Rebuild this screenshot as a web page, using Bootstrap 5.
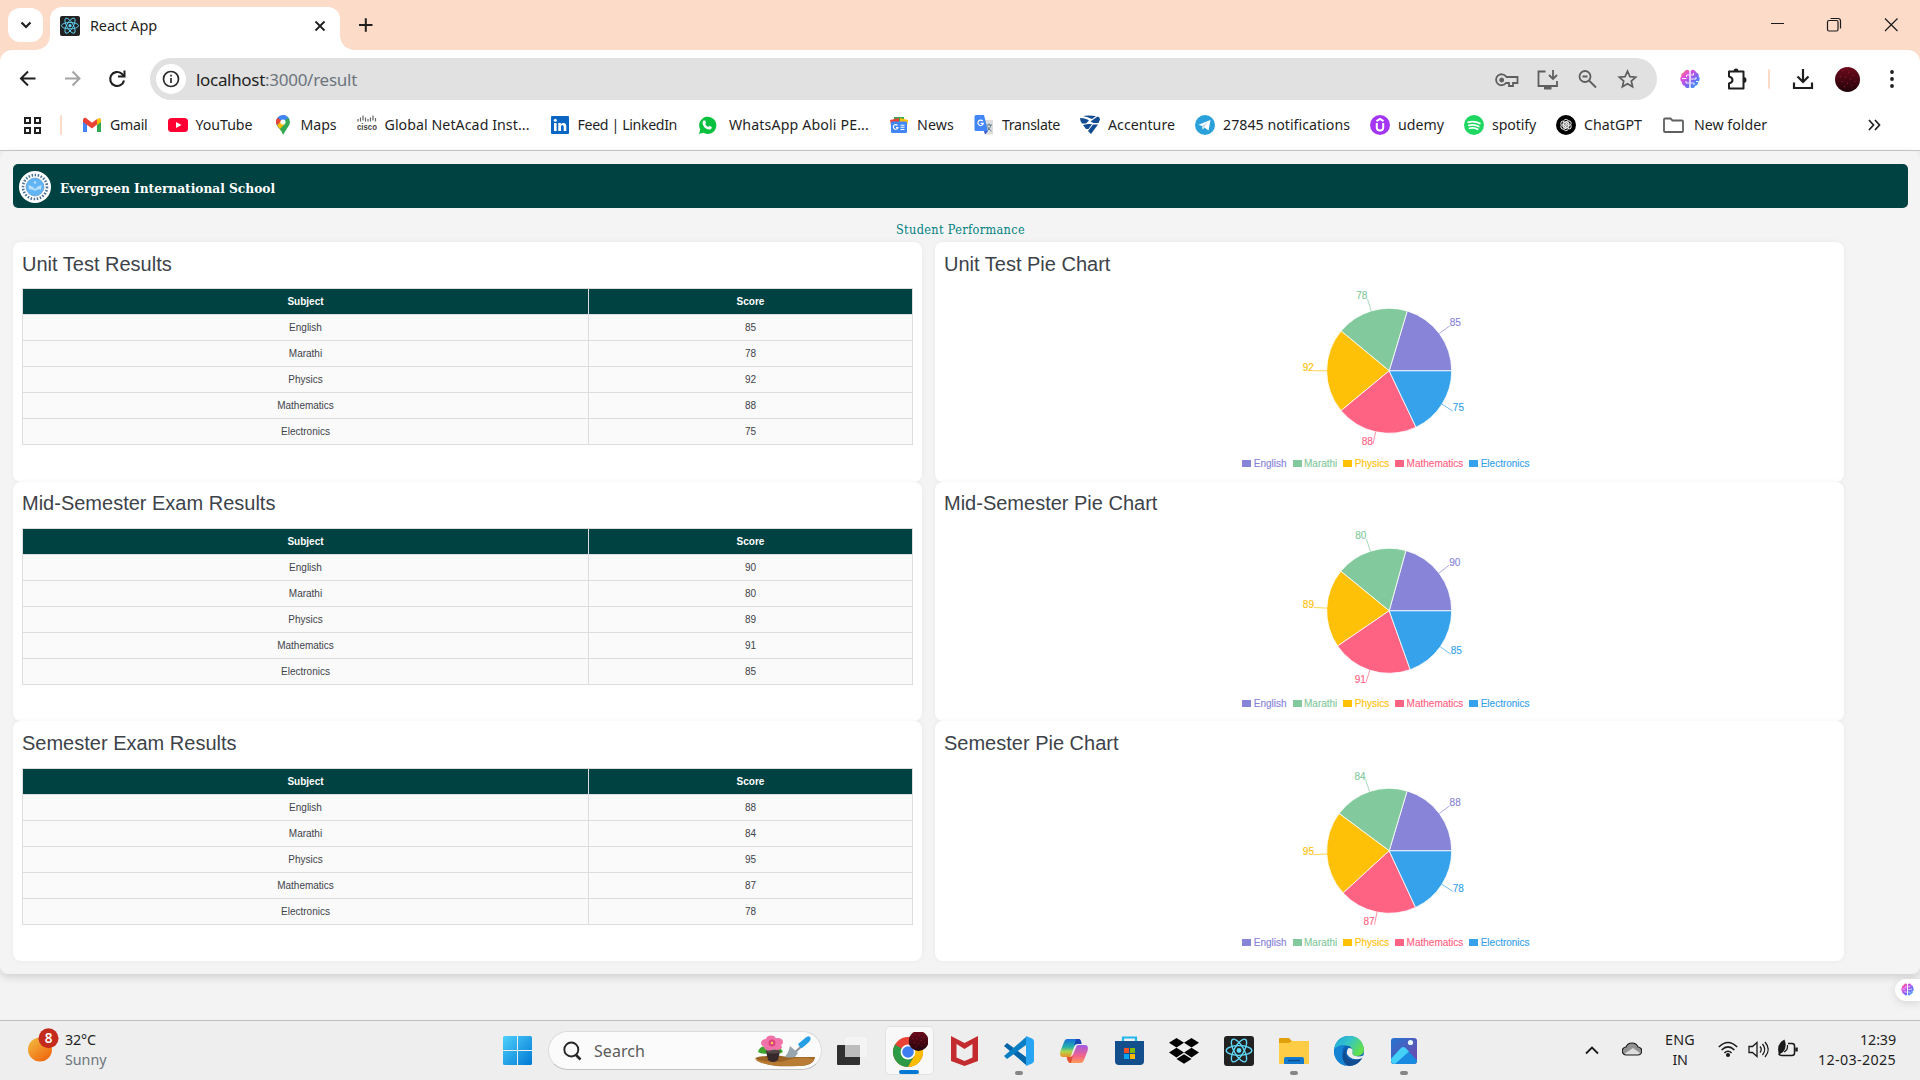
<!DOCTYPE html>
<html lang="en">
<head>
<meta charset="utf-8">
<title>React App</title>
<link href="https://cdn.jsdelivr.net/npm/bootstrap@5.3.0/dist/css/bootstrap.min.css" rel="stylesheet">
<style>
  body { width: 1920px; height: 1080px; overflow: hidden; background: #f3f3f3; font-family: "Noto Sans", "Open Sans", sans-serif; color: #1f1f1f; }
  svg { display: block; flex: none; }
  .fit { display: inline-block; white-space: nowrap; flex: none; }
  .strip { height: 50px; background: #fcdbc9; padding-left: 8px; }
  .tab-menu { width: 35px; height: 34px; border-radius: 12px; margin-top: 8px; position: relative; z-index: 1; }
  .app-tab { width: 290px; height: 43px; margin: 7px 0 0 7px; padding: 0 13px 2px 10px; border-radius: 12px 12px 0 0; position: relative; font-size: 14.5px; }
  .app-tab::before, .app-tab::after { content: ""; position: absolute; bottom: 0; width: 14px; height: 14px; }
  .app-tab::before { left: -14px; background: radial-gradient(circle at 0 0, #fcdbc9 13.5px, #fff 14px); }
  .app-tab::after { right: -14px; background: radial-gradient(circle at 100% 0, #fcdbc9 13.5px, #fff 14px); }
  .tab-title { margin-left: 10px; padding-bottom: 3px; }
  .chrome-shell { height: 101px; background: #fcdbc9; border-bottom: 1px solid #c8c8c8; }
  .chrome-body { border-radius: 12px 12px 0 0; height: 100px; }
  .toolbar { height: 58px; padding-left: 18px; }
  .omnibox { width: 1507px; height: 42px; border-radius: 21px; background: #e1e1e1; margin-left: 22px; padding: 0 16px 0 6px; font-size: 17px; }
  .omnibox .fit { padding-top: 1px; }
  .info-dot { width: 30px; height: 30px; margin-right: 10px; }
  .vline { width: 2px; height: 20px; background: #fcdbc9; border-radius: 1px; flex: none; }
  .ext-brain { margin-left: 23px; }
  .ext-puzzle { margin-left: 25px; }
  .ext-line { margin: 0 22px 0 19px; }
  .ext-user { margin-left: 21px; }
  .bookmarks { height: 34px; padding-left: 23px; font-size: 14.2px; }
  .bm-list { gap: 20px; margin-left: 19.5px; }
  .bm { gap: 8px; }
  .bm .wide { margin-left: 4px; }
  .bm .folder-name { margin-left: 2px; }
  .bm-more { margin-right: 39px; }
  .page { height: 823px; background: #f4f4f4; padding: 13px 12px 0 13px; border-radius: 8px; box-shadow: 0 3px 9px rgba(0,0,0,.15); font-family: "Liberation Sans", Arial, sans-serif; }
  .school { height: 44px; background: #004242; border-radius: 5px; padding: 2px 0 0 6px; gap: 9px; color: #fff; }
  .school-name { font: bold 13.6px "DejaVu Serif Condensed", "DejaVu Serif", serif; padding-top: 1px; }
  .perf { height: 34px; padding-top: 14px; color: #008080; font: 12.6px/16px "DejaVu Serif Condensed", "DejaVu Serif", serif; text-align: center; }
  .board { display: grid; grid-template-columns: 909px 909px; column-gap: 13px; grid-auto-rows: 239.67px; }
  .panel { background: #fff; border-radius: 8px; padding: 0 9px; box-shadow: 0 0 5px rgba(0,0,0,.05); color: #3d4349; }
  .panel h2 { font-size: 20px; line-height: 24px; padding: 9.7px 0; height: 46.4px; margin: 0; font-weight: 400; }
  .scores { width: 891px; border-collapse: collapse; table-layout: fixed; font-size: 10px; line-height: 15px; text-align: center; }
  .scores th, .scores td { height: 26px; padding: 0; border: 1px solid #ddd; vertical-align: middle; }
  .scores th { background: #004242; color: #fff; }
  .scores th:first-child { width: 566px; }
  .scores td { background: #fafafa; }
  .pie-key { height: 18px; gap: 6px; padding-right: 7px; font-size: 10px; -webkit-text-stroke: .15px currentColor; }
  .pie-key i { display: inline-block; width: 9px; height: 7px; margin-right: 2.4px; background: currentColor; }
  .below { height: 46px; }
  .side-pill { position: absolute; right: 0; top: 979px; width: 25px; height: 22px; border-radius: 11px 0 0 11px; box-shadow: 0 2px 10px rgba(0,0,0,.12); padding: 4px 0 0 6px; }
  .taskbar { height: 60px; background: #eee; border-top: 1px solid #bdbdbd; }
  .weather { width: 503px; flex: none; padding-left: 28px; font-size: 14.3px; line-height: 20px; gap: 9px; }
  .two-line { padding-bottom: 2px; }
  .search-pill { width: 274px; height: 39px; border-radius: 20px; background: #fbfbfb; border: 1px solid #dcdcdc; border-bottom-color: #c2c2c2; margin-left: 16px; padding: 0 5px 0 14px; font-size: 16px; color: #5c5c5c; gap: 12px; }
  .apps { margin-left: 6.5px; }
  .task { width: 55px; height: 59px; position: relative; }
  .task.live { width: 49px; height: 49px; margin: 0 3px 0 -3px; background: #f8f8f8; border-radius: 5px; border: 1px solid #e2e2e2; }
  .task.open::after { content: ""; position: absolute; bottom: 5px; left: 23px; width: 8px; height: 4px; border-radius: 2px; background: #868686; }
  .task.live::after { content: ""; position: absolute; bottom: 0; left: 13px; width: 20px; height: 4px; border-radius: 2px; background: #0078d4; }
  .tray { font-size: 14.3px; line-height: 20px; padding-right: 24px; gap: 23px; }
  .clock { margin-left: -3px; }
</style>
<script src="https://cdn.jsdelivr.net/npm/bootstrap@5.3.0/dist/js/bootstrap.bundle.min.js"></script>
</head>
<body>
<svg width="0" height="0" class="position-absolute">
  <defs>
    <linearGradient id="gBrain" x1="0" y1="0" x2="1" y2="1"><stop offset="0" stop-color="#ff8a4c"/><stop offset=".3" stop-color="#e04be0"/><stop offset=".65" stop-color="#6d6cf5"/><stop offset="1" stop-color="#20b8ff"/></linearGradient>
    <linearGradient id="gWin" x1="0" y1="0" x2="1" y2="1"><stop offset="0" stop-color="#4fd0fb"/><stop offset="1" stop-color="#0078d4"/></linearGradient>
    <linearGradient id="gSun" x1="0" y1="0" x2=".8" y2="1"><stop offset="0" stop-color="#f2c043"/><stop offset="1" stop-color="#f0640c"/></linearGradient>
    <linearGradient id="gAva" x1="0" y1="0" x2="0" y2="1"><stop offset="0" stop-color="#6e0a1c"/><stop offset="1" stop-color="#22040a"/></linearGradient>
    <symbol id="react" viewBox="0 0 30 30"><rect width="30" height="30" rx="3" fill="#222"/><g fill="none" stroke="#61dafb" stroke-width="1.3"><ellipse cx="15" cy="14.5" rx="12.8" ry="4.8"/><ellipse cx="15" cy="14.5" rx="12.8" ry="4.8" transform="rotate(60 15 14.5)"/><ellipse cx="15" cy="14.5" rx="12.8" ry="4.8" transform="rotate(120 15 14.5)"/></g><circle cx="15" cy="14.5" r="2.4" fill="#61dafb"/></symbol>
    <symbol id="brain" viewBox="0 0 20 20"><path fill="url(#gBrain)" d="M9.3 2v16.500c-1.600 1.200-4 .5-4.400-1.500C2.700 16.700 1.500 14.800 2 13 0 11.800-.2 9 1.300 7.600.9 5.300 2.200 3.700 4 3.300 4.700.8 8 0 9.300 2zM10.700 2v16.500c1.600 1.200 4 .5 4.400-1.500 2.200-.3 3.400-2.200 2.900-4 2-1.200 2.200-4 .7-5.400.4-2.300-.9-3.900-2.700-4.300C15.300.8 12 0 10.700 2z"/><path d="M9 6H6.500v2M2 9.500h4.500M9 14H6v-2M11 6h2.500V4M11 10h5V8M11 14h3v2M16 12.500h2" fill="none" stroke="#fff" stroke-width=".9"/></symbol>
    <symbol id="ava" viewBox="0 0 24 24"><circle cx="12" cy="12" r="12" fill="url(#gAva)"/><path d="M7 3.500h.1M13 5h.1M18 8h.1M5 9h.1M10 9.500h.1M15 11.500h.1M19 14h.1M7 14h.1M12 15.500h.1M16 18h.1M9 19h.1" stroke="#a8203a" stroke-width="1" stroke-linecap="round"/></symbol>
  </defs>
</svg>

<!-- Tab strip -->
<div class="strip d-flex">
  <div class="tab-menu bg-white d-flex align-items-center justify-content-center"><svg width="12" height="8" viewBox="0 0 12 8"><path d="M1.500 1.500 6 6l4.500-4.500" fill="none" stroke="#1f1f1f" stroke-width="2.200"/></svg></div>
  <div class="app-tab bg-white d-flex align-items-center">
    <svg width="20" height="20" class="mb-1"><use href="#react"/></svg>
    <span class="fit tab-title" data-w="67">React App</span>
    <svg class="ms-auto mb-1" width="14" height="14" viewBox="0 0 14 14"><path d="m2.500 2.500 9 9m0-9-9 9" stroke="#1f1f1f" stroke-width="1.800"/></svg>
  </div>
  <svg class="ms-3" width="20" height="50" viewBox="0 0 20 50"><path d="M3 25h13.500M9.800 18.300v13.500" stroke="#1f1f1f" stroke-width="2"/></svg>
  <svg class="ms-auto" width="152" height="50" viewBox="0 0 152 50" fill="none" stroke="#1b1b1b" stroke-width="1.200"><path d="M3 23.500h13M117 18.500l12.500 12.500m0-12.500-12.500 12.500"/><rect x="59.500" y="20.500" width="10.500" height="10.500" rx="1.500"/><path d="M62.500 18.500h7.500q2.500 0 2.500 2.500v7.500"/></svg>
</div>

<!-- Toolbar and bookmarks -->
<div class="chrome-shell">
<div class="chrome-body bg-white">
  <div class="toolbar d-flex align-items-center">
    <svg width="110" height="20" viewBox="0 0 110 20" fill="none" stroke-width="2"><path d="M17.500 9.500H3.500M10 2.500l-7 7 7 7" stroke="#1f1f1f"/><path d="M47 9.500h14M54.500 2.500l7 7-7 7" stroke="#a3a3a3"/><path d="M106 11.500A7 7 0 1 1 103.500 4.500l2.500 2.500" stroke="#1f1f1f" stroke-width="2.100"/><path d="M106.500 1.500v6H100" stroke="#1f1f1f"/></svg>
    <div class="omnibox d-flex align-items-center">
      <div class="info-dot bg-white rounded-circle d-flex align-items-center justify-content-center"><svg width="18" height="18" viewBox="0 0 18 18"><circle cx="9" cy="9" r="7.500" fill="none" stroke="#2b2b2b" stroke-width="1.700"/><path d="M9 8v5M9 4.800v1.700" stroke="#2b2b2b" stroke-width="1.700"/></svg></div>
      <span class="fit" data-w="69">localhost</span><span class="fit text-secondary" data-w="92">:3000/result</span>
      <svg class="ms-auto" width="146" height="22" viewBox="0 0 146 22" fill="none" stroke="#5e5e5e" stroke-width="1.800">
        <path d="M11 8.500A5.500 5.500 0 1 0 11 15h3v3h4v-3h4.500V9H11.500z"/><circle cx="6.700" cy="12" r="2" fill="#5e5e5e" stroke-width="1"/>
        <path d="M50.500 3.500h-7v14.500h18.500v-5M58 2v8.500M54 7l4 4 4-4"/><path d="M49 20h7.500" stroke-width="3"/>
        <g transform="translate(.5)"><circle cx="89.500" cy="8.500" r="5.500"/><path d="m93.500 12.500 7 7M87 8.500h5"/></g>
        <path d="m132.500 3.200 2.400 5.400 5.800.5-4.400 3.900 1.300 5.700-5.100-3-5.100 3 1.300-5.700-4.400-3.900 5.800-.5z" stroke-width="1.700"/>
      </svg>
    </div>
    <svg class="ext-brain" width="20" height="24" viewBox="0 0 20 20"><use href="#brain" width="20" height="20"/></svg>
    <svg class="ext-puzzle" width="24" height="26" viewBox="0 0 24 26"><path d="M4 5.500h14.500v17H4v-5q3.500-1 3.500-3.500T4 10.500z" fill="none" stroke="#1f1f1f" stroke-width="2" stroke-linejoin="round"/><path d="M8.500 5.500a2.500 3 0 0 1 5 0zM18.500 11a3 3 0 0 1 0 6z" fill="#1f1f1f"/></svg>
    <span class="vline ext-line"></span>
    <svg width="22" height="22" viewBox="0 0 22 22" fill="none" stroke="#1f1f1f" stroke-width="2.200"><path d="M11 1v13M5.500 8.500l5.500 5.500 5.500-5.500M2 14.500v5.500h18v-5.500"/></svg>
    <svg class="ext-user" width="25" height="25"><use href="#ava"/></svg>
    <svg class="ms-auto me-4" width="8" height="20" viewBox="0 0 8 20" fill="#1f1f1f"><circle cx="4" cy="3" r="1.900"/><circle cx="4" cy="10" r="1.900"/><circle cx="4" cy="17" r="1.900"/></svg>
  </div>

  <div class="bookmarks d-flex align-items-center">
    <svg width="19" height="19" viewBox="0 0 19 19" fill="none" stroke="#1f1f1f" stroke-width="2"><path d="M2 2h5v5H2zM12 2h5v5h-5zM2 12h5v5H2zM12 12h5v5h-5z"/></svg>
    <span class="vline" style="margin-left:18px"></span>
    <div class="bm-list d-flex align-items-center ms-3 ps-1">
      <div class="bm d-flex align-items-center"><svg width="20" height="20" viewBox="0 0 20 20"><path d="M1 4v13h4V8.500z" fill="#4285f4"/><path d="M19 4v13h-4V8.500z" fill="#34a853"/><path d="M15 4.500 17 3q2 0 2 2v2l-4 3z" fill="#fbbc04"/><path d="M1 7V5q.5-3 3-2l6 4.800L15 4v5.500l-5 4-9-6.500z" fill="#ea4335"/></svg><span class="fit" data-w="37.500">Gmail</span></div>
      <div class="bm d-flex align-items-center"><svg width="20" height="20" viewBox="0 0 20 20"><rect y="3" width="20" height="14" rx="3.500" fill="#ff0033"/><path d="m8 7 5.500 3L8 13z" fill="#fff"/></svg><span class="fit" data-w="57">YouTube</span></div>
      <div class="bm d-flex align-items-center"><svg width="20" height="20" viewBox="0 0 20 20"><path d="M10 0a7 7 0 0 0-7 7c0 3 1.500 4.500 3.500 7L16.500 4.500Q14.500 0 10 0z" fill="#4285f4"/><path d="M4.500 2.800 10 7 3.600 9.700Q2 6 4.500 2.800z" fill="#ea4335"/><path d="m4 10.500 10-9q6 5 0 12l-4 6.500-1.200-3z" fill="#34a853"/><path d="m4 10.500 3.500-4 4.500 2.300L7 14z" fill="#fbbc04"/><path d="M10 0q3 0 5 2.500l-4 4.500-4-3z" fill="#4285f4"/><circle cx="10" cy="7" r="2.600" fill="#fff"/></svg><span class="fit" data-w="36">Maps</span></div>
      <div class="bm d-flex align-items-center"><svg width="20" height="20" viewBox="0 0 20 20"><path d="M1 4v2.500M3.500 2.500v4M6 .5v5M8.500 2.500v4M11 4v2.500M13.500 2.500v4M16 .5v5M18.500 3v3.500" stroke="#666" stroke-width="1.200"/><text x="0" y="14.500" font-family="Liberation Sans" font-weight="bold" font-size="8.500" fill="#444" textLength="20" lengthAdjust="spacingAndGlyphs">cisco</text></svg><span class="fit" data-w="145">Global NetAcad Inst...</span></div>
      <div class="bm d-flex align-items-center"><svg width="20" height="20" viewBox="0 0 20 20"><rect x="1" y="1" width="18" height="18" rx="1" fill="#0a66c2"/><path d="M4 8h2.600v8H4zM8.300 8h2.500v1.200Q12 7.700 13.600 7.900 16.400 8.100 16.300 11.500V16h-2.600v-4.200q0-1.700-1.300-1.700T11 12v4H8.300z" fill="#fff"/><circle cx="5.300" cy="5.200" r="1.500" fill="#fff"/></svg><span class="fit" data-w="99.500">Feed | LinkedIn</span></div>
      <div class="bm d-flex align-items-center"><svg width="20" height="20" viewBox="0 0 20 20"><path d="M2 19 3.200 14.500A8.600 8.600 0 1 1 6.300 17.700z" fill="#0ac13f"/><path d="M6.500 5.500h1.700l.9 2.300-.9 1.200q1 2 3 2.900l1.200-1.200 2.300 1.200q0 2.600-2.800 2.600Q6.300 13.500 5.500 8q0-1.800 1-2.500z" fill="#fff"/></svg><span class="fit wide" data-w="140">WhatsApp Aboli PE...</span></div>
      <div class="bm d-flex align-items-center"><svg width="20" height="20" viewBox="0 0 20 20"><path d="M5 2h10v8H5z" fill="#34a853"/><path d="m1 5 9-2v8H2z" fill="#ea4335"/><path d="m19 5-8-2v8h7z" fill="#fbbc04"/><rect x="2" y="6.500" width="16" height="11.500" rx="1.200" fill="#4285f4"/><path d="M8.500 10.500a2.300 2.300 0 1 0 .4 2H7M11.500 10.200h4M11.500 12.300h4M11.500 14.500h4" fill="none" stroke="#fff" stroke-width="1.100"/></svg><span class="fit" data-w="37">News</span></div>
      <div class="bm d-flex align-items-center"><svg width="20" height="20" viewBox="0 0 20 20"><path d="M8 5h11v14.500h-8z" fill="#ddd"/><path d="M12.500 10H18M15 8.500V10M17 10q-1 4-4 6M13.500 11.500q1 3 4 4.500" fill="none" stroke="#607d8b"/><path d="m10 16 4 0-3 3.500z" fill="#3555c8"/><path d="M2 0h8l4 16H2q-1.500 0-1.500-1.500v-13Q.5 0 2 0z" fill="#4285f4"/><path d="M8.800 6.200a2.700 2.700 0 1 0 .5 2.200H6.700" fill="none" stroke="#fff" stroke-width="1.200"/></svg><span class="fit" data-w="58">Translate</span></div>
      <div class="bm d-flex align-items-center"><svg width="20" height="20" viewBox="0 0 20 20" fill="#124b91"><path d="M3 1q5-1 13 0l-4 3Q8 2 3 1zM0 3q6 0 9 2.500L6 8.500H2Q0 6 0 3zM17.500 1.500Q20 2 20 4.500l-1.500 3.500-5 0-3-1.500zM3 10l5-1 4 0-3.500 5H6zM13 9.500h5L11 19 8 16z"/></svg><span class="fit" data-w="67">Accenture</span></div>
      <div class="bm d-flex align-items-center"><svg width="20" height="20" viewBox="0 0 20 20"><circle cx="10" cy="10" r="10" fill="#2aa1da"/><path d="M3.500 9.700 15.500 5l-2 10.500-4-3-1.800 2-.7-3.500z" fill="#fff"/><path d="m7 11 6-4-4.200 5-1 2.300z" fill="#b8dcef"/></svg><span class="fit" data-w="127">27845 notifications</span></div>
      <div class="bm d-flex align-items-center"><svg width="20" height="20" viewBox="0 0 20 20"><circle cx="10" cy="10" r="10" fill="#a435f0"/><path d="M6.800 8v4.500q0 3 3.200 3t3.200-3V8M6.500 6.200 10 4l3.500 2.200" fill="none" stroke="#fff" stroke-width="2"/></svg><span class="fit" data-w="46">udemy</span></div>
      <div class="bm d-flex align-items-center"><svg width="20" height="20" viewBox="0 0 20 20"><circle cx="10" cy="10" r="10" fill="#1ed760"/><path d="M4 7.200q6.500-1.800 12 1.200M4.800 10.400q5.500-1.500 10 1.100M5.500 13.300q4.500-1.200 8.200 1" fill="none" stroke="#fff" stroke-width="1.700" stroke-linecap="round"/></svg><span class="fit" data-w="44">spotify</span></div>
      <div class="bm d-flex align-items-center"><svg width="20" height="20" viewBox="0 0 20 20"><circle cx="10" cy="10" r="10" fill="#000"/><g fill="none" stroke="#fff" stroke-width=".9"><g id="knot"><path d="M7.300 11.500V7.200A2.700 2.700 0 0 1 12 5.300M9 9.400l4-2.300"/></g><use href="#knot" transform="rotate(60 10 10)"/><use href="#knot" transform="rotate(120 10 10)"/><use href="#knot" transform="rotate(180 10 10)"/><use href="#knot" transform="rotate(240 10 10)"/><use href="#knot" transform="rotate(300 10 10)"/></g></svg><span class="fit" data-w="58">ChatGPT</span></div>
      <div class="bm d-flex align-items-center"><svg width="22" height="20" viewBox="0 0 22 20"><path d="M2 4.500Q2 3.500 3 3.500h5.500l2 2H20q1 0 1 1v9.500q0 1-1 1H3q-1 0-1-1z" fill="none" stroke="#5f5f5f" stroke-width="1.800"/></svg><span class="fit folder-name" data-w="73">New folder</span></div>
    </div>
    <svg class="ms-auto bm-more" width="14" height="12" viewBox="0 0 14 12"><path d="m2 1 4.500 5L2 11M8 1l4.500 5L8 11" fill="none" stroke="#1f1f1f" stroke-width="1.700"/></svg>
  </div>
</div>
</div>

<!-- Web page -->
<main class="page">
  <header class="school d-flex align-items-center">
    <svg width="32" height="32" viewBox="0 0 32 32"><circle cx="16" cy="16" r="16" fill="#fff"/><circle cx="16" cy="16" r="12" fill="none" stroke="#4a6f95" stroke-width="2.600" stroke-dasharray="1.500 1.600"/><circle cx="16" cy="16" r="9" fill="#62b5f5" stroke="#5b8fc4" stroke-width=".6"/><path d="M16 20q-3-2.500-6-1.500 0-2.500-1-4 5 0 7 4 2-4 7-4-1 1.500-1 4-3-1-6 1.500z" fill="#b5dffd"/><circle cx="16" cy="11.500" r="1.300" fill="#b5dffd"/></svg>
    <span class="school-name fit" data-w="215">Evergreen International School</span>
  </header>
  <div class="perf"><span class="fit" data-w="129">Student Performance</span></div>
  <div class="board" id="board"></div>
</main>
<div class="below"></div>
<div class="side-pill bg-white"><svg width="13" height="13"><use href="#brain"/></svg></div>

<!-- Taskbar -->
<footer class="taskbar d-flex align-items-center">
  <div class="weather d-flex align-items-center">
    <svg width="28" height="50" viewBox="0 0 28 50" class="overflow-visible"><circle cx="12" cy="23.500" r="12" fill="url(#gSun)"/><circle cx="20.500" cy="12.200" r="10" fill="#c42b1c"/><text x="20.500" y="17.100" text-anchor="middle" font-size="13.500" font-weight="600" fill="#fff">8</text></svg>
    <div class="two-line"><div><span class="fit" data-w="31">32°C</span></div><div class="text-secondary"><span class="fit" data-w="41.500">Sunny</span></div></div>
  </div>
  <svg width="29" height="29" viewBox="0 0 29 29" fill="url(#gWin)"><path d="M1.500 0H14v14H0V1.500Q0 0 1.500 0zM15 0h12.500Q29 0 29 1.500V14H15zM0 15h14v14H1.500Q0 29 0 27.500zM15 15h14v12.500q0 1.500-1.500 1.500H15z"/></svg>
  <div class="search-pill d-flex align-items-center">
    <svg width="19" height="20" viewBox="0 0 19 20" fill="none" stroke="#262626"><circle cx="8.300" cy="8.500" r="7" stroke-width="1.900"/><path d="m13 14 4.500 4.500" stroke-width="2.600"/></svg>
    <span class="fit" data-w="51">Search</span>
    <svg class="ms-auto" width="62" height="32" viewBox="0 0 62 32"><path d="M1 23q6-2 20-3l13 2 27 0q-1 9-17 9-34 2-43-8z" fill="#9c6426"/><path d="M1 24q20 6 32 1 12-4 27-1-2 7-17 7Q8 32 1 24z" fill="#b97c34"/><path d="M4 17q2-7 9-5l4 6q-8 2-13-1zM29 17q-3-6-8-5l-3 6q7 2 11-1z" fill="#3fa52c"/><path d="M12 16h14l-2 9q-5 4-10 0z" fill="#35292b"/><ellipse cx="19" cy="16.500" rx="7.500" ry="2" fill="#574648"/><g fill="#f172a9"><ellipse cx="12" cy="8" rx="5" ry="4"/><ellipse cx="24" cy="7" rx="5" ry="4"/><ellipse cx="17" cy="4" rx="5" ry="3.500"/><ellipse cx="15" cy="12" rx="5" ry="3.500"/><ellipse cx="23" cy="12" rx="5" ry="3"/></g><circle cx="18" cy="8" r="3.500" fill="#dc477f"/><circle cx="18" cy="8" r="1.200" fill="#ffd24d"/><path d="m40 18 9-8" stroke="#8b939a" stroke-width="2"/><path d="m44 9 6-5q4-4 6-2t-2 6l-6 5q-2 0-4-4z" fill="#249fe6"/><path d="m36 11 8 7-3 4q-4 1-10 0 4-5 5-11z" fill="#98a6b0"/></svg>
  </div>
  <div class="apps d-flex align-items-center ps-1">
    <div class="task d-flex align-items-center justify-content-center"><svg class="me-3" width="30" height="28" viewBox="0 0 30 28"><rect y="8" width="23" height="20" rx="1" fill="#303030"/><rect x="8" width="22" height="20" rx="1" fill="#f4f4f4" opacity=".93"/><path d="M8 8h15v12H8z" fill="#bdbdbd"/></svg></div>
    <div class="task live d-flex align-items-center justify-content-center"><svg width="38" height="38" viewBox="0 0 38 38"><circle cx="18" cy="20" r="15" fill="#ea4335"/><path d="M18 20 5 12.500A15 15 0 0 0 18 35l6.500-11.200z" fill="#2d9a46"/><path d="M18 20h0l13-7.500A15 15 0 0 1 18 35l6.500-11.200z" fill="#fbbc04"/><circle cx="18" cy="20" r="7.400" fill="#fff"/><circle cx="18" cy="20" r="5.800" fill="#3e7cf1"/><svg x="18.500" y="-1" width="20" height="20"><use href="#ava"/></svg></svg></div>
    <div class="task d-flex align-items-center justify-content-center"><svg width="27" height="30" viewBox="0 0 27 30"><path d="m0 0 13.500 7L27 0v25l-13.500 5L0 25z" fill="#c42b2f"/><path d="m5.500 8 8 5 8-5v13.500l-8 3.500-8-3.500z" fill="#eee"/></svg></div>
    <div class="task open d-flex align-items-center justify-content-center"><svg width="30" height="30" viewBox="0 0 30 30"><path d="m0 10 3-3 19 14v8z" fill="#0065a9"/><path d="m0 20 3 3L22 9V1z" fill="#087fc5"/><path d="m22 0 6 2.500q2 1 2 3v19q0 2-2 3L22 30z" fill="#27a5f2"/></svg></div>
    <div class="task d-flex align-items-center justify-content-center"><svg width="28" height="26" viewBox="0 0 28 26"><defs><linearGradient id="gC1" x1="0" y1="0" x2="0" y2="1"><stop stop-color="#176fdb"/><stop offset=".45" stop-color="#25b1a8"/><stop offset=".7" stop-color="#b1d64a"/><stop offset="1" stop-color="#f18b2c"/></linearGradient><linearGradient id="gC2" x1="0" y1="0" x2="0" y2="1"><stop stop-color="#a25be4"/><stop offset=".6" stop-color="#f0628c"/><stop offset="1" stop-color="#ff9b57"/></linearGradient></defs><path d="M7 1h11q2.500 0 3.500 5H17q-2 0-3 3l-3 9q-.5 1-2 1H3q-4 0-2.500-6L4 4q1-3 3-3z" fill="url(#gC1)"/><path d="M16 1h3q2 0 2.500 5H17q-2 0-3 2z" fill="#1a45b5"/><path d="M21 25H10q-2.500 0-3.500-6H10q2 0 3-2.500L16.500 8q.5-1 2-1H25q4 0 2.500 6L24 22q-1 3-3 3z" fill="url(#gC2)"/><path d="M7 19h3q2 0 3-2l-2 8q-3 0-4-6z" fill="#df5034"/></svg></div>
    <div class="task d-flex align-items-center justify-content-center"><svg width="29" height="30" viewBox="0 0 29 30"><path d="M8 6V1.500h13V6" fill="none" stroke="#22b5ee" stroke-width="2.200"/><path d="M0 5h29v20q0 4-4 4H4q-4 0-4-4z" fill="#124f8c"/><path d="M9 12h5v5H9z" fill="#f25022"/><path d="M15 12h5v5h-5z" fill="#7fba00"/><path d="M9 18h5v5H9z" fill="#00a4ef"/><path d="M15 18h5v5h-5z" fill="#ffb900"/></svg></div>
    <div class="task d-flex align-items-center justify-content-center"><svg width="30" height="26" viewBox="0 0 30 26"><path d="m7.500 0 7.500 4.800-7.500 4.800L0 4.800zM22.500 0 30 4.800l-7.500 4.800L15 4.800zM7.500 9.800l7.500 4.800-7.500 4.800L0 14.600zM22.500 9.800l7.500 4.800-7.500 4.800-7.500-4.800zM15 16.200l7.500 4.800L15 25.800 7.500 21z"/></svg></div>
    <div class="task d-flex align-items-center justify-content-center"><svg width="30" height="30"><use href="#react"/></svg></div>
    <div class="task open d-flex align-items-center justify-content-center"><svg width="30" height="28" viewBox="0 0 30 28"><path d="M0 2Q0 1 1 1h9l3 3h16q1 0 1 1v4H0z" fill="#dfa00b"/><path d="M0 6h10l3-2h16q1 0 1 1v22H1q-1 0-1-1z" fill="#ffcd45"/><path d="M5 27v-5q0-2 2-2h16q2 0 2 2v5z" fill="#1279cd"/><path d="M9 23.500h12" stroke="#0a4c93" stroke-width="1.500"/></svg></div>
    <div class="task d-flex align-items-center justify-content-center"><svg width="30" height="30" viewBox="0 0 30 30"><defs><linearGradient id="gE" x1="0" y1="0" x2="1" y2=".5"><stop stop-color="#1da5dd"/><stop offset=".5" stop-color="#34c3c9"/><stop offset="1" stop-color="#63e04c"/></linearGradient></defs><circle cx="15" cy="15" r="15" fill="#0d63b8"/><path d="M0 14Q2 0 15 0t15 13q0 7-7 7-6 0-4.500-4Q19 10 12 9.500 4 9 0 14z" fill="url(#gE)"/><path d="M0 14q4-6 11-4.500Q5 16 12 30 0 27 0 14z" fill="#1583d4"/><path d="M12 12q-2 12 8 12 4 0 8-2-5 8-13 8Q4 24 12 12z" fill="#124c91"/><path d="M14.500 12q5 0 4 4-1 3 3 4 4 1 8-.5L28.500 22q-8 3-13-1-5-4-1-9z" fill="#eee"/></svg></div>
    <div class="task open d-flex align-items-center justify-content-center"><svg width="26" height="26" viewBox="0 0 26 26"><defs><linearGradient id="gP" x1="0" y1="0" x2="1" y2="1"><stop stop-color="#2474cf"/><stop offset="1" stop-color="#7545ad"/></linearGradient></defs><rect width="26" height="26" rx="3" fill="url(#gP)"/><path d="m0 20 9-9q3-3 6 0l11 11q0 4-3 4H3q-3 0-3-3z" fill="#198ae0"/><path d="m0 21 10-11q2.500-2 5 .5l3 3L4 26q-4 0-4-4z" fill="#45d0f7"/><circle cx="19.500" cy="4.500" r="2.600" fill="#eaf6ff"/></svg></div>
  </div>
  <div class="tray ms-auto d-flex align-items-center">
    <svg width="14" height="9" viewBox="0 0 14 9"><path d="m1 7.500 6-6 6 6" fill="none" stroke="#1a1a1a" stroke-width="1.800"/></svg>
    <svg width="20" height="15" viewBox="0 0 20 15" class="mb-1"><path d="M4.500 14a4 4 0 0 1-.5-8A6.500 6.500 0 0 1 16 6a4 4 0 0 1-.5 8z" fill="#929292"/><path d="m2 13 9-6 7 5-2 2H4.500z" fill="#ddd"/><path d="M4.500 14a4 4 0 0 1-.5-8A6.500 6.500 0 0 1 16 6a4 4 0 0 1-.5 8z" fill="none" stroke="#1a1a1a" stroke-width="1.200"/></svg>
    <div class="text-center two-line"><div><span class="fit" data-w="30">ENG</span></div><div><span class="fit" data-w="15">IN</span></div></div>
    <svg class="mb-1" width="80" height="20" viewBox="0 0 80 20" fill="none" stroke="#1a1a1a" stroke-width="1.500"><path d="M.8 8q9.200-9 18.400 0M3.600 11q6.400-6.200 12.800 0M6.400 14q3.600-3.500 7.200 0"/><circle cx="10" cy="16" r="1.300" fill="#1a1a1a"/><path d="M31 7.500h3.500l4.500-4v14l-4.500-4H31zM42 7.500q2.500 3 0 6M44.500 5q4.500 5.500 0 11M47 3q6.500 7.500 0 15" stroke-width="1.300"/><path d="M70 4.500h4q2.500 0 2.500 2.500v7q0 2.500-2.500 2.500H64q-2.500 0-3-1.500"/><path d="M78.500 8.500v4" stroke-width="2.500"/><path d="M60.500 13.500q-2-9 6-13 3 8-1.500 12.500l-4.500 3z" fill="#1a1a1a" stroke="none"/><path d="M69.500 6q.5 5-3.500 7" stroke-width="1.200"/></svg>
    <div class="text-end two-line clock"><div><span class="fit" data-w="36">12:39</span></div><div><span class="fit" data-w="78">12-03-2025</span></div></div>
  </div>
</footer>

<script>
  const subjects = ["English", "Marathi", "Physics", "Mathematics", "Electronics"];
  const colors = ["#8884d8", "#82ca9d", "#ffc107", "#ff6384", "#36a2eb"];
  const exams = [
    ["Unit Test Results", "Unit Test Pie Chart", [85, 78, 92, 88, 75]],
    ["Mid-Semester Exam Results", "Mid-Semester Pie Chart", [90, 80, 89, 91, 85]],
    ["Semester Exam Results", "Semester Pie Chart", [88, 84, 95, 87, 78]]
  ];

  function pie(scores) {
    const cx = 445.2, cy = 82.8, r = 62.5, total = scores.reduce((a, b) => a + b, 0);
    const at = (angle, radius) => [cx + radius * Math.cos(angle), cy - radius * Math.sin(angle)];
    let angle = 0, slices = "", labels = "";
    scores.forEach((score, i) => {
      const end = angle + score / total * 2 * Math.PI, mid = (angle + end) / 2;
      slices += `<path d="M${cx},${cy}L${at(angle, r)}A${r},${r} 0 0 0 ${at(end, r)}Z" fill="${colors[i]}" stroke="#fff" stroke-width=".8"/>`;
      const tip = at(mid, 75.3);
      labels += `<path d="M${at(mid, r)}L${tip}" stroke="${colors[i]}" stroke-width=".7"/>
        <text x="${tip[0]}" y="${tip[1] + .3}" text-anchor="${tip[0] > cx ? "start" : "end"}" fill="${colors[i]}" stroke="${colors[i]}" stroke-width=".15" font-size="10">${score}</text>`;
      angle = end;
    });
    return `<svg width="891" height="166" viewBox="0 0 891 166">${slices}${labels}</svg>`;
  }

  document.getElementById("board").innerHTML = exams.map(([title, chart, scores]) => `
    <section class="panel"><h2>${title}</h2>
      <table class="scores"><thead><tr><th>Subject</th><th>Score</th></tr></thead>
      <tbody>${subjects.map((s, i) => `<tr><td>${s}</td><td>${scores[i]}</td></tr>`).join("")}</tbody></table>
    </section>
    <section class="panel"><h2>${chart}</h2>${pie(scores)}
      <div class="pie-key d-flex justify-content-center align-items-center">${subjects.map((s, i) => `<span style="color:${colors[i]}"><i></i>${s}</span>`).join("")}</div>
    </section>`).join("");

  // Spread each label's letters over its intended width
  document.querySelectorAll(".fit").forEach(el => {
    const natural = el.getBoundingClientRect().width;
    el.style.letterSpacing = (el.dataset.w - natural) / el.textContent.length + "px";
  });
</script>
</body>
</html>
